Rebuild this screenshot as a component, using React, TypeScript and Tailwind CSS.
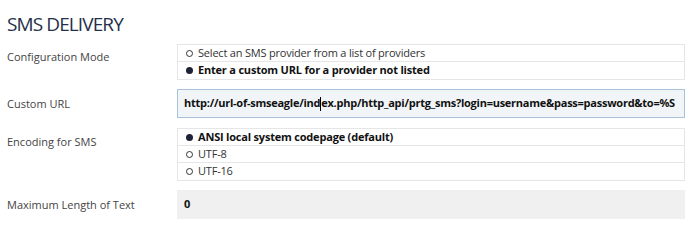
import { FC } from "react";

const font = { fontFamily: '"Open Sans", "Noto Sans", sans-serif' };

const Radio: FC<{ checked?: boolean; label: string; last?: boolean }> = ({
  checked,
  label,
  last,
}) => (
  <div
    className={
      "flex items-center h-[17px] pl-[8px] " +
      (last ? "" : "border-b border-[#e6e6e6]")
    }
  >
    {checked ? (
      <span className="w-[7px] h-[7px] rounded-full bg-[#1d2333] mr-[5px]" />
    ) : (
      <span className="w-[7px] h-[7px] rounded-full border border-[#333] mr-[5px]" />
    )}
    <span
      className={
        "text-[11px] tracking-[-0.2px] " +
        (checked ? "font-bold text-[#111]" : "text-[#333]")
      }
    >
      {label}
    </span>
  </div>
);

const Row: FC<{
  label: string;
  className?: string;
  labelClass?: string;
  children: any;
}> = ({ label, className, labelClass, children }) => (
  <div className={"flex " + (className || "")}>
    <div
      className={
        "w-[177px] shrink-0 pl-[7px] text-[11px] leading-[16px] text-[#444] " +
        (labelClass || "")
      }
    >
      {label}
    </div>
    <div className="w-[508px]">{children}</div>
  </div>
);

export default function App() {
  return (
    <div className="w-[685px] h-[241px] bg-white" style={font}>
      <h2 className="pl-[7px] pt-[11px] text-[19px] leading-[26px] text-[#25304a] tracking-[-0.9px]">
        SMS DELIVERY
      </h2>
      <Row label="Configuration Mode" className="mt-[7px] items-start" labelClass="pt-[5px]">
        <div className="border border-[#e6e6e6]">
          <Radio label="Select an SMS provider from a list of providers" />
          <Radio checked last label="Enter a custom URL for a provider not listed" />
        </div>
      </Row>
      <Row label="Custom URL" className="mt-[9px] items-center">
        <div className="h-[29px] border border-[#a9c2db] bg-[#f2f5f8] flex items-center pl-[6px] text-[11px] font-bold text-[#111] tracking-[-0.25px] whitespace-nowrap overflow-hidden">
          http://url-of-smseagle/ind
          <span className="inline-block w-px h-[14px] bg-black" />
          ex.php/http_api/prtg_sms?login=username&amp;pass=password&amp;to=%S
        </div>
      </Row>
      <Row label="Encoding for SMS" className="mt-[10px] items-start" labelClass="pt-[6px]">
        <div className="border border-[#e6e6e6]">
          <Radio checked label="ANSI local system codepage (default)" />
          <Radio label="UTF-8" />
          <Radio last label="UTF-16" />
        </div>
      </Row>
      <Row label="Maximum Length of Text" className="mt-[9px] items-center">
        <div className="h-[29px] bg-[#f0f0f0] flex items-center pl-[7px] text-[11px] font-bold text-[#111]">
          0
        </div>
      </Row>
    </div>
  );
}
